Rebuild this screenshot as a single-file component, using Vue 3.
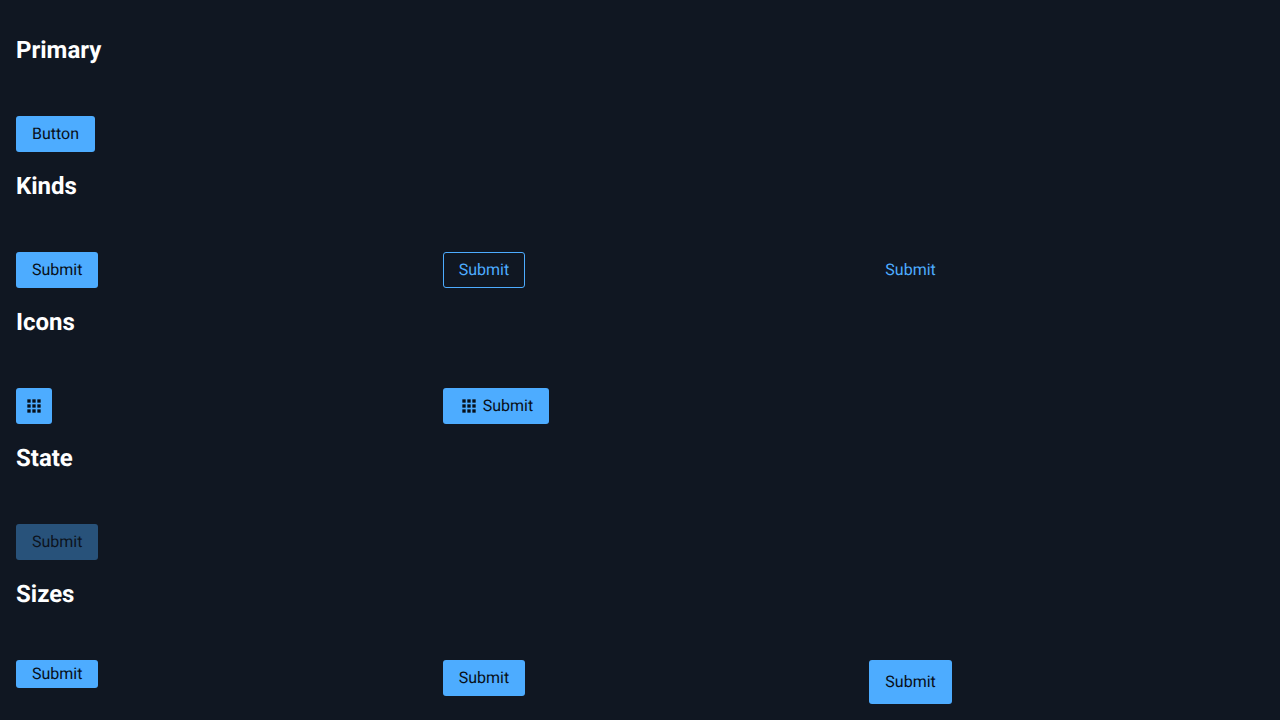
<script setup>
const grid = [4, 10, 16]
</script>

<template>
  <main class="page">
    <section>
      <h2>Primary</h2>
      <div class="row"><div><button class="btn">Button</button></div></div>
    </section>
    <section>
      <h2>Kinds</h2>
      <div class="row">
        <div><button class="btn">Submit</button></div>
        <div><button class="btn outline">Submit</button></div>
        <div><button class="btn text">Submit</button></div>
      </div>
    </section>
    <section>
      <h2>Icons</h2>
      <div class="row">
        <div>
          <button class="btn icon-only" aria-label="Apps">
            <svg class="icon" viewBox="0 0 24 24" aria-hidden="true">
              <template v-for="y in grid" :key="y">
                <rect v-for="x in grid" :key="x" :x="x" :y="y" width="4" height="4" />
              </template>
            </svg>
          </button>
        </div>
        <div>
          <button class="btn">
            <svg class="icon" viewBox="0 0 24 24" aria-hidden="true">
              <template v-for="y in grid" :key="y">
                <rect v-for="x in grid" :key="x" :x="x" :y="y" width="4" height="4" />
              </template>
            </svg>
            Submit
          </button>
        </div>
      </div>
    </section>
    <section>
      <h2>State</h2>
      <div class="row"><div><button class="btn" disabled>Submit</button></div></div>
    </section>
    <section>
      <h2>Sizes</h2>
      <div class="row">
        <div><button class="btn small">Submit</button></div>
        <div><button class="btn">Submit</button></div>
        <div><button class="btn large">Submit</button></div>
      </div>
    </section>
  </main>
</template>

<style>
body {
  background: #101722;
}
</style>

<style scoped>
.page {
  padding: 16px;
  color: #fff;
  font-family: Roboto, "Liberation Sans", sans-serif;
  font-size: 16px;
  text-rendering: geometricPrecision;
}
h2 {
  margin: 20px 0 52px;
  font-size: 24px;
  line-height: 28px;
  font-weight: 700;
}
.row {
  display: grid;
  grid-template-columns: repeat(3, 1fr);
  gap: 32px;
}
.row > div {
  display: flex;
  align-items: flex-start;
}
.btn {
  display: inline-flex;
  align-items: center;
  justify-content: center;
  gap: 4px;
  box-sizing: border-box;
  height: 36px;
  padding: 0 16px;
  border: 0;
  border-radius: 3px;
  background: #4dacff;
  color: #080f18;
  font: inherit;
  line-height: 24px;
  text-rendering: inherit;
}
.btn.outline {
  padding: 0 15px;
  border: 1px solid #4dacff;
  background: transparent;
  color: #4dacff;
}
.btn.text {
  background: transparent;
  color: #4dacff;
}
.btn.small {
  height: 28px;
}
.btn.large {
  height: 44px;
}
.btn.icon-only {
  width: 36px;
  padding: 0;
}
.btn:disabled {
  opacity: 0.4;
}
.icon {
  width: 20px;
  height: 20px;
  fill: currentColor;
}
</style>
